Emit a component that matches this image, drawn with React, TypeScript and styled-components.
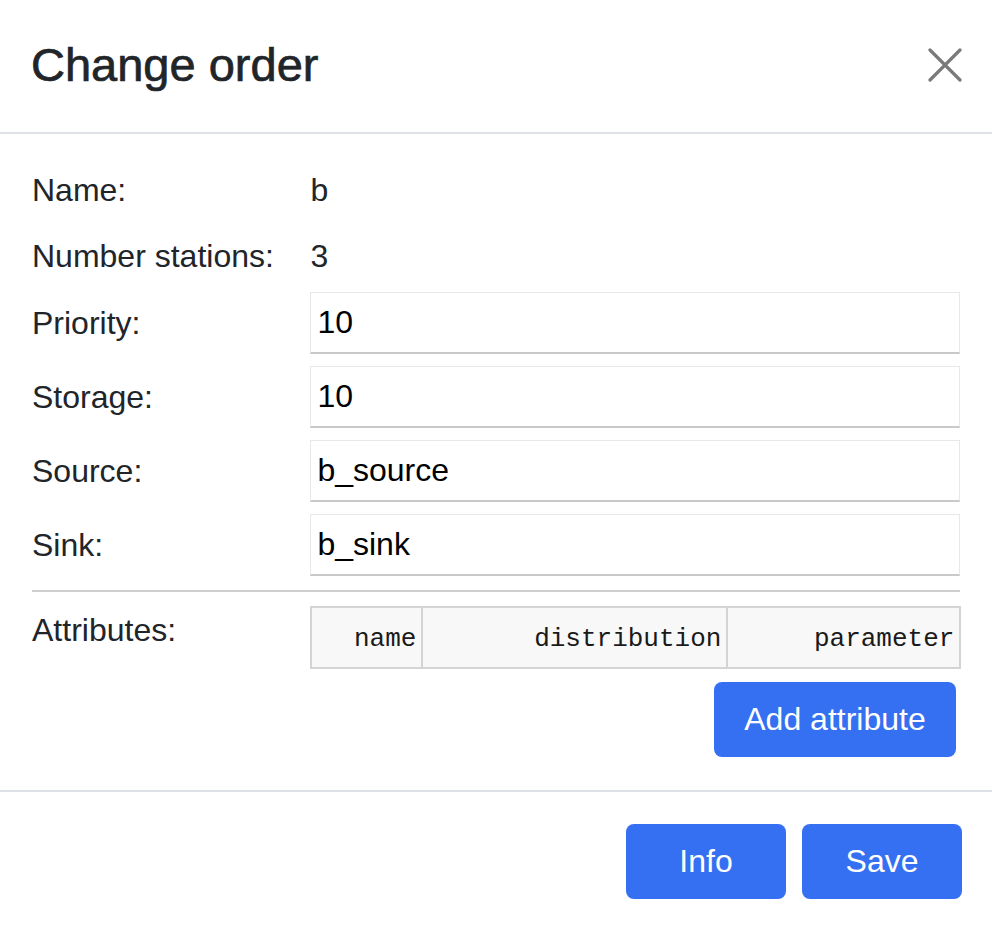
import styled, { createGlobalStyle } from 'styled-components';

const GlobalStyle = createGlobalStyle`
  html, body {
    margin: 0;
    padding: 0;
    background: #fff;
  }
  body {
    font-family: "Liberation Sans", Arial, Helvetica, sans-serif;
    color: #212529;
  }
  * {
    box-sizing: border-box;
  }
`;

const infoRows = [
  { label: 'Name:', value: 'b' },
  { label: 'Number stations:', value: '3' },
];

const inputRows = [
  { label: 'Priority:', value: '10' },
  { label: 'Storage:', value: '10' },
  { label: 'Source:', value: 'b_source' },
  { label: 'Sink:', value: 'b_sink' },
];

const columns = [
  { title: 'name', width: 111 },
  { title: 'distribution', width: 305 },
  { title: 'parameter', width: 233 },
];

export default function App() {
  return (
    <>
      <GlobalStyle />
      <Modal>
        <Header>
          <Title>Change order</Title>
          <CloseButton aria-label="Close">
            <svg width="34" height="34" viewBox="0 0 34 34">
              <path d="M2 2 L32 32 M32 2 L2 32" stroke="#7a7a7a" strokeWidth="3.2" strokeLinecap="round" />
            </svg>
          </CloseButton>
        </Header>

        <Body>
          {infoRows.map((r) => (
            <TextRow key={r.label}>
              <Label>{r.label}</Label>
              <Value>{r.value}</Value>
            </TextRow>
          ))}

          <Inputs>
            {inputRows.map((r) => (
              <InputRow key={r.label}>
                <Label>{r.label}</Label>
                <Field defaultValue={r.value} />
              </InputRow>
            ))}
          </Inputs>

          <Divider />

          <AttrRow>
            <Label>Attributes:</Label>
            <AttrTable>
              <colgroup>
                {columns.map((c) => (
                  <col key={c.title} style={{ width: c.width }} />
                ))}
              </colgroup>
              <thead>
                <tr>
                  {columns.map((c) => (
                    <HeadCell key={c.title}>{c.title}</HeadCell>
                  ))}
                </tr>
              </thead>
            </AttrTable>
          </AttrRow>

          <AddRow>
            <PrimaryButton $wide>Add attribute</PrimaryButton>
          </AddRow>
        </Body>

        <Footer>
          <PrimaryButton>Info</PrimaryButton>
          <PrimaryButton>Save</PrimaryButton>
        </Footer>
      </Modal>
    </>
  );
}

const Modal = styled.div`
  width: 992px;
  min-height: 930px;
  background: #fff;
`;

const Header = styled.div`
  height: 134px;
  display: flex;
  align-items: center;
  justify-content: space-between;
  padding: 0 30px 2px 31px;
  border-bottom: 2px solid #dee2e6;
`;

const Title = styled.h4`
  margin: 0;
  font-size: 47px;
  font-weight: 500;
  line-height: 1.2;
  color: #212529;
  -webkit-text-stroke: 0.7px #212529;
`;

const CloseButton = styled.button`
  width: 34px;
  height: 34px;
  padding: 0;
  border: none;
  background: none;
  display: flex;
  align-items: center;
  justify-content: center;
  cursor: pointer;
`;

const Body = styled.div`
  padding: 23px 32px 33px 32px;
`;

const TextRow = styled.div`
  display: grid;
  grid-template-columns: 30% 70%;
  align-items: center;
  height: 66px;
`;

const Label = styled.div`
  font-size: 32px;
  line-height: 48px;
  color: #212529;
`;

const Value = styled.div`
  font-size: 32px;
  line-height: 48px;
  color: #212529;
`;

const Inputs = styled.div`
  display: flex;
  flex-direction: column;
  gap: 12px;
  margin-top: 3px;
`;

const InputRow = styled.div`
  display: grid;
  grid-template-columns: 30% 70%;
  align-items: center;
`;

const Field = styled.input`
  height: 62px;
  width: 100%;
  border: 1px solid #e8e8e8;
  border-bottom: 2px solid #c9c9c9;
  border-radius: 0;
  padding: 0 6px;
  font-family: "Liberation Sans", Arial, sans-serif;
  font-size: 32px;
  color: #000;
  background: #fff;
  outline: none;
`;

const Divider = styled.hr`
  margin: 14px 0 14px 0;
  border: none;
  border-top: 2px solid #cfcfcf;
  height: 0;
`;

const AttrRow = styled.div`
  display: grid;
  grid-template-columns: 30% 70%;
  align-items: start;
`;

const AttrTable = styled.table`
  width: 100%;
  border-collapse: collapse;
  table-layout: fixed;
`;

const HeadCell = styled.th`
  height: 61px;
  padding: 2px 5px 0 0;
  border: 2px solid #d4d4d4;
  background: #f8f8f8;
  text-align: right;
  font-family: "Liberation Mono", "Courier New", monospace;
  font-size: 26px;
  font-weight: 400;
  color: #1a1a1a;
`;

const AddRow = styled.div`
  display: flex;
  justify-content: flex-end;
  margin-top: 13px;
  padding-right: 4px;
`;

const PrimaryButton = styled.button<{ $wide?: boolean }>`
  height: 75px;
  min-width: ${(p) => (p.$wide ? '242px' : '160px')};
  padding: 0 26px;
  border: none;
  border-radius: 8px;
  background: #3570f2;
  color: #fff;
  font-family: "Liberation Sans", Arial, sans-serif;
  font-size: 32px;
  cursor: pointer;
`;

const Footer = styled.div`
  display: flex;
  justify-content: flex-end;
  gap: 16px;
  padding: 32px 30px 31px 0;
  border-top: 2px solid #dee2e6;
`;
